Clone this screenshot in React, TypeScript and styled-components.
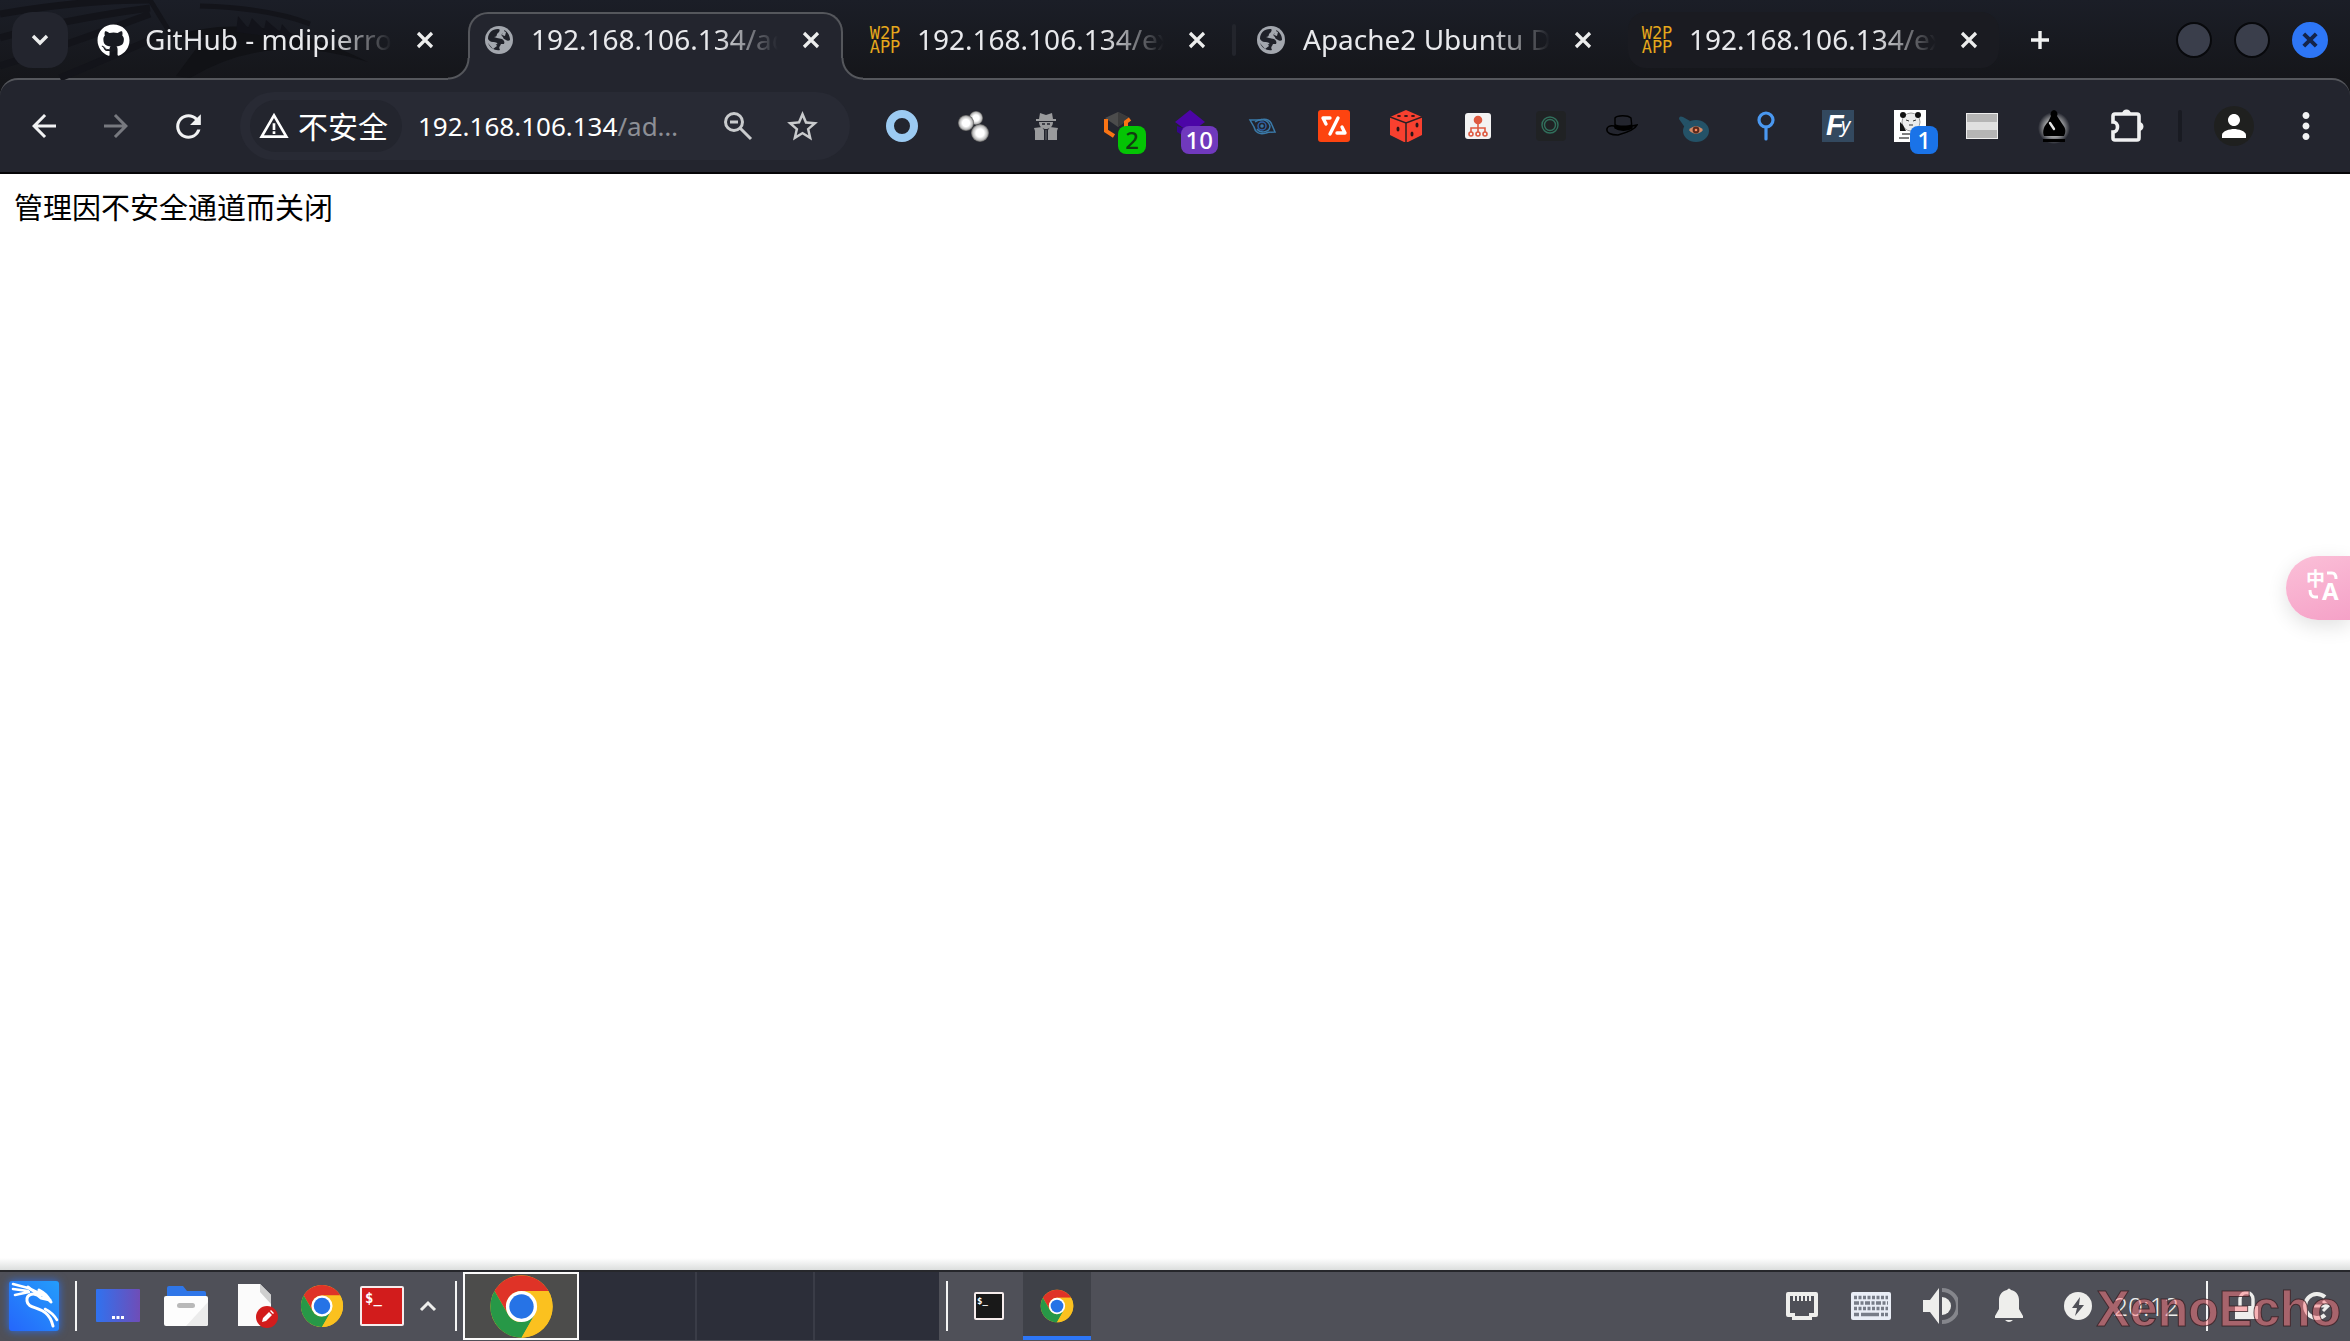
import React from "react";
import styled, { createGlobalStyle, css } from "styled-components";
import { FaGithub } from "react-icons/fa";
import {
  MdArrowBack,
  MdArrowForward,
  MdRefresh,
  MdStarBorder,
  MdMoreVert,
  MdWarningAmber,
  MdPerson,
} from "react-icons/md";

const color = {
  frame: "#1b1e27",
  frameLow: "#15161a",
  toolbar: "#23252e",
  field: "#282a34",
  line: "#55575c",
  text: "#e8e9ec",
  panel: "#4f5058",
  pager: "#2c2e39",
  blue: "#2d76f6",
};

const ui = `"Noto Sans", "Noto Sans CJK SC", sans-serif`;

const GlobalStyle = createGlobalStyle`
  * { box-sizing: border-box; }
  body { margin: 0; background: #fff; font-family: ${ui}; }
  button { border: 0; padding: 0; background: none; color: inherit; font: inherit; cursor: pointer; }
`;

const Screen = styled.div`
  display: flex;
  flex-direction: column;
  min-height: 100vh;
  position: relative;
  overflow: hidden;
`;

const Header = styled.header`
  position: relative;
  background: linear-gradient(${color.frame}, ${color.frameLow} 80px);
  border-bottom: 2px solid #050506;
  color: ${color.text};
`;

const Wallpaper = styled.svg`
  position: absolute;
  top: 0;
  left: 0;
  width: 480px;
  height: 80px;
`;

const TabStrip = styled.div`
  position: relative;
  z-index: 1;
  display: flex;
  height: 78px;
  padding: 12px 22px 0 12px;
`;

const TabSearch = styled.button`
  display: grid;
  place-items: center;
  width: 56px;
  height: 56px;
  margin-right: 16px;
  border-radius: 20px;
  background: ${color.toolbar};
`;

const TabList = styled.div`
  display: flex;
  align-items: flex-start;
  gap: 15px;
`;

const activeTab = css`
  width: 375px;
  height: 68px;
  margin: 0 -2px;
  padding-bottom: 14px;
  border: 2px solid ${color.line};
  border-bottom: 0;
  border-radius: 20px 20px 0 0;
  background: ${color.toolbar};

  &::before,
  &::after {
    content: "";
    position: absolute;
    bottom: 0;
    width: 22px;
    height: 22px;
  }
  &::before {
    left: -22px;
    background: radial-gradient(circle at 0 0, transparent 19px, ${color.line} 20px, ${color.line} 21px, ${color.toolbar} 22px);
  }
  &::after {
    right: -22px;
    background: radial-gradient(circle at 100% 0, transparent 19px, ${color.line} 20px, ${color.line} 21px, ${color.toolbar} 22px);
  }
`;

const Tab = styled.div<{ $active?: boolean; $divided?: boolean; $tinted?: boolean }>`
  position: relative;
  display: flex;
  align-items: center;
  width: 371px;
  height: 56px;
  padding: 0 14px 0 13px;
  border-radius: 18px;
  background: ${(p) => (p.$tinted ? "#1a1b21" : "transparent")};
  ${(p) => p.$active && activeTab}
  ${(p) =>
    p.$divided &&
    css`
      &::after {
        content: "";
        position: absolute;
        right: -9px;
        top: 12px;
        width: 4px;
        height: 32px;
        border-radius: 2px;
        background: #23252c;
      }
    `}
`;

const Favicon = styled.span`
  display: grid;
  place-items: center;
  flex: none;
  width: 32px;
  height: 32px;
  margin-right: 16px;
`;

const PixelMark = styled.span`
  color: #e6a81c;
  font: 17px/14px "DejaVu Sans Mono", monospace;
  text-align: center;
`;

const TabTitle = styled.span`
  flex: 1;
  padding-bottom: 2px;
  overflow: hidden;
  white-space: nowrap;
  font-size: 28px;
  line-height: 40px;
  mask-image: linear-gradient(to right, #000 calc(100% - 60px), transparent);
`;

const IconButton = styled.button`
  display: grid;
  place-items: center;
  flex: none;
  width: 32px;
  height: 32px;
  margin-left: 17px;
`;

const NewTab = styled(IconButton)`
  width: 56px;
  height: 56px;
  margin-left: 13px;
`;

const WindowControls = styled.div`
  display: flex;
  align-items: center;
  gap: 22px;
  height: 56px;
  margin-left: auto;
`;

const WindowButton = styled.button<{ $close?: boolean }>`
  display: grid;
  place-items: center;
  width: 36px;
  height: 36px;
  border: 2px solid ${(p) => (p.$close ? color.blue : "#08090c")};
  border-radius: 50%;
  background: ${(p) => (p.$close ? color.blue : "#3a3e4b")};
`;

const Toolbar = styled.div`
  display: flex;
  align-items: center;
  height: 94px;
  padding: 0 8px;
  border-top: 2px solid ${color.line};
  border-radius: 18px 18px 0 0;
  background: ${color.toolbar};
`;

const ToolButton = styled.button<{ $dim?: boolean }>`
  position: relative;
  display: grid;
  place-items: center;
  flex: none;
  width: 72px;
  height: 72px;
  color: ${(p) => (p.$dim ? "#77797f" : "#f1f2f3")};
`;

const Omnibox = styled.div`
  display: flex;
  flex: 1;
  align-items: center;
  min-width: 0;
  height: 68px;
  margin: 0 16px;
  padding: 0 16px 0 10px;
  border-radius: 34px;
  background: ${color.field};
`;

const SecurityChip = styled.button`
  display: flex;
  align-items: center;
  gap: 8px;
  flex: none;
  height: 52px;
  padding: 0 14px 0 8px;
  border-radius: 26px;
  background: ${color.toolbar};
  color: #fff;
`;

const ChipLabel = styled.span`
  padding-bottom: 2px;
  font-family: "Noto Sans CJK SC", sans-serif;
  font-size: 30px;
  line-height: 40px;
`;

const Address = styled.a`
  flex: 1;
  min-width: 0;
  margin-left: 16px;
  overflow: hidden;
  color: #fff;
  font-size: 26px;
  line-height: 40px;
  text-decoration: none;
  white-space: nowrap;
`;

const AddressPath = styled.span`
  color: #8d8f96;
`;

const FieldButton = styled.button`
  display: grid;
  place-items: center;
  flex: none;
  width: 64px;
  height: 56px;
  color: #c9cbcd;
`;

const Badge = styled.span<{ $bg: string; $ink: string }>`
  position: absolute;
  top: 36px;
  right: 8px;
  min-width: 28px;
  padding: 0 5px;
  border-radius: 8px;
  background: ${(p) => p.$bg};
  color: ${(p) => p.$ink};
  font-size: 24px;
  font-weight: 500;
  line-height: 28px;
  text-align: center;
`;

const ToolDivider = styled.span`
  flex: none;
  width: 4px;
  height: 32px;
  margin: 0 16px;
  border-radius: 2px;
  background: #191b22;
`;

const Profile = styled.span`
  display: grid;
  place-items: center;
  width: 40px;
  height: 40px;
  border-radius: 50%;
  background: #1f201f;
  color: #fff;
`;

const Page = styled.main`
  flex: 1;
  padding: 12px 14px;
  background: linear-gradient(to top, #dcdedd, #fff 12px);
  color: #000;
  font-family: "Noto Sans CJK SC", sans-serif;
  font-size: 29px;
  line-height: 40px;
`;

const TranslateButton = styled.button`
  position: absolute;
  top: 556px;
  right: 0;
  width: 64px;
  height: 64px;
  padding-left: 20px;
  border-radius: 32px 0 0 32px;
  background: linear-gradient(160deg, #fbc0d8, #f5a1c7);
  box-shadow: 0 6px 20px rgba(0, 0, 0, 0.12);
  text-align: left;
`;

const Taskbar = styled.footer`
  position: relative;
  display: flex;
  align-items: center;
  height: 71px;
  padding-bottom: 1px;
  border-top: 2px solid #26272b;
  background: ${color.panel};
  color: #eeeeec;
`;

const Rule = styled.span<{ $before?: number; $after?: number }>`
  flex: none;
  width: 2px;
  height: 50px;
  margin-left: ${(p) => p.$before ?? 0}px;
  margin-right: ${(p) => p.$after ?? 0}px;
  background: #f4f4f4;
`;

const Launcher = styled.button<{ $w: number }>`
  display: grid;
  place-items: center;
  width: ${(p) => p.$w}px;
  height: 60px;
`;

const KaliButton = styled(Launcher)`
  margin: 0 8px 0 9px;
  filter: drop-shadow(0 0 4px #2d6fe8);
`;

const Pager = styled.div`
  display: flex;
  align-self: stretch;
  margin: 0 7px 0 6px;
`;

const Workspace = styled.button<{ $current?: boolean }>`
  display: grid;
  place-items: center;
  width: ${(p) => (p.$current ? 116 : 118)}px;
  border-right: 2px solid #3a3c47;
  background: ${color.pager};
  &:last-child {
    width: 124px;
    border-right: 0;
  }
  ${(p) =>
    p.$current &&
    css`
      border: 2px solid #fafafa;
      background: #4c4c4b;
    `}
`;

const Tasks = styled.div`
  display: flex;
  align-self: stretch;
  margin-left: 7px;
`;

const TaskButton = styled.button<{ $active?: boolean }>`
  display: grid;
  place-items: center;
  width: 68px;
  border-top: 4px solid transparent;
  border-bottom: 4px solid ${(p) => (p.$active ? color.blue : "transparent")};
  background: ${(p) => (p.$active ? "#3f4148" : "transparent")};
`;

const Tray = styled.div`
  display: flex;
  align-items: center;
  margin-left: auto;
`;

const TrayButton = styled.button`
  display: grid;
  place-items: center;
  width: 69px;
  height: 60px;
`;

const Clock = styled.time`
  margin: 0 27px 0 1px;
  font-size: 26px;
  font-weight: 300;
  line-height: 40px;
`;

const Watermark = styled.span`
  position: absolute;
  right: 9px;
  bottom: 4px;
  color: rgba(255, 120, 128, 0.5);
  font: bold 50px/56px "Liberation Sans", sans-serif;
  -webkit-text-stroke: 1px rgba(48, 26, 30, 0.75);
  pointer-events: none;
`;

/* ---------- drawings ---------- */

const Cross = ({ size = 18, ink = "#eceded", w = 3.2 }) => (
  <svg width={size} height={size} viewBox="0 0 18 18" stroke={ink} strokeWidth={w} fill="none">
    <path d="M2 2l14 14M16 2L2 16" />
  </svg>
);

const Globe = () => (
  <svg width="30" height="30" viewBox="0 0 30 30">
    <circle cx="15" cy="15" r="14" fill="#a3a7ae" />
    <path
      fill="#1f2129"
      d="M4 14C4 8 8 4 14 4c2 0 2 1 1 3l-2 2c0 2-1 3-3 3l3 1 5 1c2 1 3 3 2 5h-3l-1 2c-1 1-1 2 0 4-5 1-10-2-12-7l6 1c3 0 4 1 3-1-1-1-3-1-4-1-3 0-4-2-5-3zM20 5c4 2 6 6 6 10-1 1-3 1-4 0s-3-1-3-3c-2-1-2-3 0-4 1 0 2-1 1-3z"
    />
    <path fill="#a3a7ae" d="M3 17l8 1 2 3-4 3zM19 6l3 1-1 4-3-1z" />
  </svg>
);

const Chrome = ({ size }: { size: number }) => (
  <svg width={size} height={size} viewBox="0 0 48 48">
    <circle cx="24" cy="24" r="23" fill="#fbc11f" />
    <path d="M4.1 12.5A23 23 0 0 1 43.9 12.5H24A11.5 11.5 0 0 0 14 29.7z" fill="#df3327" />
    <path d="M4.1 12.5L14 29.8A11.5 11.5 0 0 0 24 35.5L33.9 29.8 24 47A23 23 0 0 1 4.1 12.5z" fill="#279847" />
    <path d="M43.9 12.5A23 23 0 0 1 24 47L33.9 29.8A11.5 11.5 0 0 0 34 18L24 12.5z" fill="#fbc11f" />
    <circle cx="24" cy="24" r="11.5" fill="#fff" />
    <circle cx="24" cy="24" r="9" fill="#2673e6" />
  </svg>
);

const ext = (body: React.ReactNode) => (
  <svg width="32" height="32" viewBox="0 0 32 32" fill="none">
    {body}
  </svg>
);

const extensions: { name: string; icon: React.ReactNode; badge?: [string, string, string] }[] = [
  { name: "Ring", icon: ext(<circle cx="16" cy="16" r="12" stroke="#9ccbf2" strokeWidth="8" />) },
  {
    name: "Dots",
    icon: ext(
      <>
        <defs>
          <radialGradient id="dot">
            <stop offset="0.45" stopColor="#fff" />
            <stop offset="0.8" stopColor="#bcbcbc" />
            <stop offset="1" stopColor="#555" />
          </radialGradient>
        </defs>
        <circle cx="18" cy="8" r="7" fill="url(#dot)" />
        <circle cx="8" cy="13" r="8" fill="url(#dot)" />
        <circle cx="22" cy="23" r="9" fill="url(#dot)" />
      </>
    ),
  },
  {
    name: "Agent",
    icon: ext(
      <g fill="#9a9b9d">
        <path d="M10 3l6 2 6-2 1 6H9zM6 9h20v2H6zM9 12h14c0 5-4 7-7 7s-7-2-7-7z" />
        <path d="M4 18l8-1 2 3v10H5V21zM28 18l-8-1-2 3v10h9V21z" />
        <path d="M15 20h2v10h-2z" fill="#44464c" />
        <path d="M12 14h3M17 14h3" stroke="#23252e" strokeWidth="1.5" />
      </g>
    ),
  },
  {
    name: "Cube",
    badge: ["2", "#04c404", "#123c12"],
    icon: ext(
      <>
        <path d="M3 8l13-6 12 6-12 9z" fill="#4c4c4c" />
        <path d="M16 2l12 6-12 9z" fill="#3b3b3b" />
        <path d="M4 9v12l8 5M28 9l-4 3v5" stroke="#f97414" strokeWidth="4" />
      </>
    ),
  },
  {
    name: "Layers",
    badge: ["10", "#7039bd", "#fff"],
    icon: ext(
      <>
        <path d="M16 0l15 12-15 11L1 12z" fill="#4c05a7" />
        <path d="M3 16l12 4v9L3 22z" fill="#35058a" />
      </>
    ),
  },
  {
    name: "Eye",
    icon: ext(
      <g stroke="#3a7aa9" strokeWidth="1.5">
        <path d="M4 10h10c7-2 11 1 12 5l3 7c-4 0-6 0-9 1-7 2-11-1-12-6z" />
        <path d="M9 12c5-4 13-3 15 4 0 6-9 8-13 3" />
        <circle cx="16" cy="16" r="4" stroke="#2d5ea6" />
        <circle cx="16" cy="16" r="1" />
      </g>
    ),
  },
  {
    name: "Code",
    icon: ext(
      <>
        <rect width="32" height="32" rx="3" fill="#fd4410" />
        <path d="M12 8H5l3 6M20 8l-8 16M19 23h8l-3-6" stroke="#fff" strokeWidth="3.4" strokeLinejoin="round" strokeLinecap="round" />
      </>
    ),
  },
  {
    name: "Dice",
    icon: ext(
      <>
        <path d="M16 0l16 7v18l-16 8L0 25V7z" fill="#f8402f" />
        <path d="M0 7l16 6 16-6M16 13v19" stroke="#2a2025" strokeWidth="1.5" />
        <g fill="#2a1518">
          <ellipse cx="9" cy="6" rx="2" ry="1" />
          <ellipse cx="16" cy="6" rx="2" ry="1" />
          <ellipse cx="23" cy="6" rx="2" ry="1" />
          <ellipse cx="8" cy="19" rx="1.5" ry="2.5" />
          <ellipse cx="27" cy="15" rx="1.5" ry="2.5" />
          <ellipse cx="22" cy="24" rx="1.5" ry="2.5" />
        </g>
      </>
    ),
  },
  {
    name: "Tree",
    icon: ext(
      <>
        <rect x="3" y="3" width="26" height="26" rx="3" fill="#f3f3f3" />
        <g stroke="#df5a41" strokeWidth="1.6">
          <circle cx="16" cy="10" r="3.5" fill="#df5a41" />
          <path d="M16 13v9M9 22v-4h14v4" />
          <circle cx="9" cy="24" r="2" />
          <circle cx="16" cy="24" r="2" />
          <circle cx="23" cy="24" r="2" />
        </g>
      </>
    ),
  },
  {
    name: "Target",
    icon: ext(
      <>
        <rect x="2" y="1" width="30" height="30" rx="4" fill="#202224" />
        <circle cx="16" cy="15" r="8" stroke="#31705c" strokeWidth="1.4" />
        <circle cx="16" cy="15" r="5.5" stroke="#31705c" strokeWidth="1.4" />
      </>
    ),
  },
  {
    name: "Hat",
    icon: ext(
      <>
        <path d="M8 16c4 4 14 4 18 0l5-1c-2 5-12 8-19 10-7 0-12-2-11-6 0-2 3-4 7-3z" fill="#23252e" stroke="#000" strokeWidth="1.6" />
        <path d="M9 8c2-3 13-3 16 0l1 10c-4 3-13 3-17 0z" fill="#23252e" stroke="#000" strokeWidth="1.4" />
        <path d="M9 14c4 2 13 2 17 0v4c-4 3-13 3-17 0z" fill="#000" />
      </>
    ),
  },
  {
    name: "Watch",
    icon: ext(
      <>
        <path d="M1 9c0-3 2-3 4-2l7 4-4 8z" fill="#245267" />
        <ellipse cx="18" cy="21" rx="13" ry="11" fill="#245267" />
        <path d="M11 20c4-5 10-5 14 0-4 5-10 5-14 0z" fill="#d48a66" />
        <circle cx="18" cy="20" r="3.4" fill="#5b2a1d" />
        <circle cx="18" cy="20" r="1.3" fill="#ff8b5d" />
      </>
    ),
  },
  {
    name: "Pin",
    icon: ext(
      <g stroke="#4a98f0" strokeWidth="3.2" strokeLinecap="round">
        <circle cx="16" cy="10" r="7" />
        <path d="M16 17v12" />
      </g>
    ),
  },
  {
    name: "Fy",
    icon: ext(
      <>
        <rect width="32" height="32" fill="#33495f" />
        <text x="4" y="25" fill="#fff" fontFamily="Liberation Sans, sans-serif" fontStyle="italic" fontWeight="bold" fontSize="29">F</text>
        <text x="19" y="22" fill="#fff" fontFamily="Noto Sans, sans-serif" fontStyle="italic" fontSize="20">y</text>
      </>
    ),
  },
  {
    name: "Panda",
    badge: ["1", "#1a73e8", "#fff"],
    icon: ext(
      <>
        <rect width="32" height="32" fill="#fff" />
        <ellipse cx="17" cy="12" rx="9" ry="9" fill="#ececec" stroke="#9a9a9a" />
        <circle cx="9" cy="5" r="3" fill="#111" />
        <circle cx="24" cy="5" r="3" fill="#111" />
        <path d="M6 12l3 3 3 6H6z" fill="#111" />
        <path d="M12 10l3 1M19 11l3-1M15 15h4" stroke="#333" />
        <path d="M8 24h8M5 28h10" stroke="#555" strokeWidth="1.4" />
      </>
    ),
  },
  {
    name: "Bars",
    icon: ext(
      <>
        <rect x="0.5" y="3.5" width="31" height="25" fill="#b5b5b5" stroke="#ededed" />
        <rect x="1" y="12" width="30" height="8" fill="#e0e0e0" />
      </>
    ),
  },
  {
    name: "Bishop",
    icon: (
      <svg width="36" height="36" viewBox="-2 -2 36 36">
        <defs>
          <radialGradient id="glow">
            <stop offset="0.55" stopColor="#a0a1a3" />
            <stop offset="1" stopColor="#23252e" />
          </radialGradient>
        </defs>
        <circle cx="16" cy="18" r="16" fill="url(#glow)" />
        <path d="M16 0a4 4 0 0 1 3 6l6 9c3 4 3 7 1 11H6c-2-5 0-10 4-14l3-6a4 4 0 0 1 3-6zM5 29h22v3H5z" fill="#000" />
        <path d="M12 13l4 6" stroke="#e5e5e5" strokeWidth="2.4" strokeLinecap="round" />
      </svg>
    ),
  },
  {
    name: "扩展程序",
    icon: (
      <svg width="36" height="36" viewBox="-3 -2 36 36" fill="none">
        <path
          d="M4 4h22q2 0 2 2v22q0 2-2 2H4q-2 0-2-2v-6c6 0 6-10 0-10V6q0-2 2-2z"
          stroke="#eff0f1"
          strokeWidth="3.6"
        />
        <path d="M11 4a4.500 4.500 0 0 1 9 0zM28 12a4.500 4.500 0 0 1 0 9z" fill="#eff0f1" />
      </svg>
    ),
  },
];

const W2p = () => (
  <PixelMark>
    W2P
    <br />
    APP
  </PixelMark>
);

const tabs = [
  { title: "GitHub - mdipierro/evote", icon: <FaGithub size={33} color="#fff" /> },
  { title: "192.168.106.134/admin", icon: <Globe />, active: true },
  { title: "192.168.106.134/examples", icon: <W2p />, divided: true },
  { title: "Apache2 Ubuntu Default", icon: <Globe /> },
  { title: "192.168.106.134/examples", icon: <W2p />, tinted: true },
];

const Kali = () => (
  <svg width="50" height="50" viewBox="0 0 50 50" fill="none">
    <defs>
      <linearGradient id="kali" x1="0" y1="1" x2="1" y2="0">
        <stop offset="0" stopColor="#2566fb" />
        <stop offset="1" stopColor="#249dfb" />
      </linearGradient>
    </defs>
    <rect width="50" height="50" rx="3" fill="url(#kali)" />
    <g stroke="#fff" strokeWidth="2.6" strokeLinecap="round" strokeLinejoin="round">
      <path d="M4 3l15 4M4 8l15 2M6 14l14-3" />
      <path d="M19 6c5 6 12 3 22 14M30 9c6 3 8 6 12 12M41 19l-9-2c-6-7-15-4-14 3 1 10 21 3 26 25" strokeWidth="3" />
      <path d="M36 28c6 3 9 6 12 11" />
    </g>
  </svg>
);

const DesktopIcon = () => (
  <svg width="44" height="34" viewBox="0 0 44 34">
    <defs>
      <linearGradient id="desk">
        <stop offset="0" stopColor="#3072ef" />
        <stop offset="1" stopColor="#6f4db7" />
      </linearGradient>
    </defs>
    <rect width="44" height="33" rx="1" fill="url(#desk)" />
    <path d="M16 27h3v3h-3zM20.500 27h3v3h-3zM25 27h3v3h-3z" fill="#fff" />
  </svg>
);

const FolderIcon = () => (
  <svg width="44" height="40" viewBox="0 0 44 40">
    <path d="M3 2q0-2 2-2h14l4 5h17q2 0 2 2v8H3z" fill="#2f76e8" />
    <rect y="10" width="44" height="30" rx="2" fill="#fdfdfd" />
    <path d="M44 16v22q0 2-2 2H22z" fill="#ececec" />
    <rect x="13" y="17" width="18" height="5" rx="2.500" fill="#b9b9b9" />
  </svg>
);

const EditorIcon = () => (
  <svg width="42" height="46" viewBox="0 0 42 46">
    <path d="M1 1h22l11 11v31H1z" fill="#fbfbfb" />
    <path d="M23 1l11 11v9L23 9z" fill="#cfcfcf" />
    <circle cx="30" cy="34" r="11" fill="#d21c1c" />
    <path d="M25 39l1-4 6-6 3 3-6 6zM33 28l1-1 3 3-1 1z" fill="#fff" />
  </svg>
);

const Terminal = ({ w, h, bg }: { w: number; h: number; bg: string }) => (
  <svg width={w} height={h} viewBox={`0 0 ${w} ${h}`}>
    <rect x="1" y="1" width={w - 2} height={h - 2} rx="1" fill={bg} stroke="#f6ecec" strokeWidth="2" />
    <text
      x={w > 40 ? 5 : 3}
      y={w > 40 ? 17 : 12}
      fill="#fff"
      fontFamily="DejaVu Sans Mono, monospace"
      fontWeight="bold"
      fontSize={w > 40 ? 14 : 9}
    >
      $_
    </text>
  </svg>
);

const Ethernet = () => (
  <svg width="32" height="28" viewBox="0 0 32 28">
    <path d="M2 0h28q2 0 2 2v21q0 2-2 2h-4v3H6v-3H2q-2 0-2-2V2q0-2 2-2z" fill="#eeeeec" />
    <path d="M4 4h24v17h-5v3H9v-3H4z" fill={color.panel} />
    <path d="M8 4v5M12 4v5M16 4v5M20 4v5M24 4v5" stroke="#eeeeec" strokeWidth="2" />
  </svg>
);

const Keyboard = () => (
  <svg width="42" height="29" viewBox="0 0 42 29">
    <rect x="1" y="0" width="40" height="28" rx="2" fill="#e9edf6" />
    <g stroke="#777c88" strokeWidth="3.4">
      <path d="M4 5.500h34" strokeDasharray="3 1.500" />
      <path d="M4 11h34" strokeDasharray="5 1.500 3 1.500" />
      <path d="M4 16.500h34" strokeDasharray="3 1.500" />
      <path d="M4 22.500h5M11 22.500h18M31 22.500h3M35 22.500h3" />
    </g>
  </svg>
);

const Volume = () => (
  <svg width="36" height="38" viewBox="0 0 36 38" fill="none">
    <path d="M1 13h7L17 1v36L8 25H1z" fill="#eeeeec" />
    <path d="M20 10a9 9 0 0 1 0 18z" fill="#eeeeec" />
    <path d="M20 3a16 16 0 0 1 0 32" stroke="#85868c" strokeWidth="4" />
  </svg>
);

const Bell = () => (
  <svg width="30" height="36" viewBox="0 0 30 36" fill="#eeeeec">
    <path d="M13 2q2-3 4 0c5 1 8 5 8 10v9l4 7v2H1v-2l4-7v-9C5 7 8 3 13 2zM11 32h8q-4 4-8 0z" />
  </svg>
);

const Power = () => (
  <svg width="28" height="28" viewBox="0 0 28 28">
    <circle cx="14" cy="14" r="14" fill="#eeeeec" />
    <path d="M16 5l-8 11h5l-2 8 9-11h-5z" fill={color.panel} />
  </svg>
);

const Lock = () => (
  <svg width="26" height="30" viewBox="0 0 26 30" fill="none">
    <path d="M6 16V8a6.500 6.500 0 0 1 13 0v8" stroke="#eeeeec" strokeWidth="3.400" />
    <path d="M1 15h23v13H1z" fill="#eeeeec" />
  </svg>
);

const Logout = () => (
  <svg width="30" height="30" viewBox="0 0 30 30" fill="none" stroke="#eeeeec" strokeWidth="4">
    <path d="M24 6A12 12 0 1 0 24 24" />
    <path d="M13 15h14M22 10l5 5-5 5" strokeWidth="3" />
  </svg>
);

export default function App() {
  return (
    <Screen>
      <GlobalStyle />
      <Header>
        <Wallpaper viewBox="0 0 480 80" aria-hidden="true">
          <g fill="none" stroke="#13141a" strokeWidth="7">
            <path d="M0 14Q80 0 150 0M0 38Q60 20 150 8M60 78L160 36M0 66Q70 44 150 14" />
            <path d="M150 0L172 36M200 6Q270 8 310 24" strokeWidth="5" />
          </g>
          <path d="M172 36Q260 8 368 62Q270 30 190 78L176 76 204 38z" fill="#111216" />
          <path d="M238 16l10 12 4-10 12 12 2-10 14 12 2-8 14 16-60-8z" fill="#12131a" />
        </Wallpaper>
        <TabStrip>
          <TabSearch aria-label="搜索标签页">
            <svg width="20" height="20" viewBox="0 0 20 20" fill="none" stroke="#eceded" strokeWidth="3.4">
              <path d="M3 6l7 7 7-7" />
            </svg>
          </TabSearch>
          <TabList role="tablist">
            {tabs.map((t, i) => (
              <Tab key={i} role="tab" aria-selected={!!t.active} $active={t.active} $divided={t.divided} $tinted={t.tinted}>
                <Favicon>{t.icon}</Favicon>
                <TabTitle>{t.title}</TabTitle>
                <IconButton aria-label="关闭">
                  <Cross />
                </IconButton>
              </Tab>
            ))}
          </TabList>
          <NewTab aria-label="新标签页">
            <svg width="22" height="22" viewBox="0 0 22 22" stroke="#f0f1f1" strokeWidth="3.4">
              <path d="M11 2v18M2 11h18" />
            </svg>
          </NewTab>
          <WindowControls>
            <WindowButton aria-label="最小化" />
            <WindowButton aria-label="最大化" />
            <WindowButton aria-label="关闭窗口" $close>
              <Cross size={16} ink="#14244a" w={4.4} />
            </WindowButton>
          </WindowControls>
        </TabStrip>
        <Toolbar>
          <ToolButton aria-label="后退">
            <MdArrowBack size={36} />
          </ToolButton>
          <ToolButton aria-label="前进" $dim>
            <MdArrowForward size={36} />
          </ToolButton>
          <ToolButton aria-label="重新加载">
            <MdRefresh size={37} />
          </ToolButton>
          <Omnibox>
            <SecurityChip>
              <MdWarningAmber size={32} />
              <ChipLabel>不安全</ChipLabel>
            </SecurityChip>
            <Address href="#">
              192.168.106.134<AddressPath>/ad…</AddressPath>
            </Address>
            <FieldButton aria-label="缩放">
              <svg width="30" height="30" viewBox="0 0 30 30" fill="none" stroke="currentColor" strokeWidth="3">
                <circle cx="11" cy="11" r="8.500" />
                <path d="M17 17l11 11M7 11h8" />
              </svg>
            </FieldButton>
            <FieldButton aria-label="收藏">
              <MdStarBorder size={37} />
            </FieldButton>
          </Omnibox>
          {extensions.map((e) => (
            <ToolButton key={e.name} aria-label={e.name}>
              {e.icon}
              {e.badge && (
                <Badge $bg={e.badge[1]} $ink={e.badge[2]}>
                  {e.badge[0]}
                </Badge>
              )}
            </ToolButton>
          ))}
          <ToolDivider />
          <ToolButton aria-label="个人资料">
            <Profile>
              <MdPerson size={36} />
            </Profile>
          </ToolButton>
          <ToolButton aria-label="菜单">
            <MdMoreVert size={42} />
          </ToolButton>
        </Toolbar>
      </Header>

      <Page>管理因不安全通道而关闭</Page>

      <TranslateButton aria-label="翻译">
        <svg width="34" height="34" viewBox="0 0 34 34" fill="none">
          <text x="0" y="17" fill="#fff" fontFamily="Noto Sans CJK SC, sans-serif" fontWeight="bold" fontSize="19">中</text>
          <text x="16" y="31" fill="#fff" fontFamily="Noto Sans, sans-serif" fontWeight="bold" fontSize="24">A</text>
          <path d="M21 4h5q4 0 4 6M4 21q0 7 5 7h3" stroke="#fff" strokeWidth="3" />
        </svg>
      </TranslateButton>

      <Taskbar>
        <KaliButton $w={50} aria-label="应用程序">
          <Kali />
        </KaliButton>
        <Rule $before={8} $after={11} />
        <Launcher $w={60} aria-label="桌面">
          <DesktopIcon />
        </Launcher>
        <Launcher $w={76} aria-label="文件">
          <FolderIcon />
        </Launcher>
        <Launcher $w={68} aria-label="编辑器">
          <EditorIcon />
        </Launcher>
        <Launcher $w={60} aria-label="Chrome">
          <Chrome size={44} />
        </Launcher>
        <Launcher $w={60} aria-label="终端">
          <Terminal w={44} h={40} bg="#d21c1c" />
        </Launcher>
        <Launcher $w={32} aria-label="更多">
          <svg width="18" height="12" viewBox="0 0 18 12" fill="none" stroke="#eeeeec" strokeWidth="3">
            <path d="M2 10l7-7 7 7" />
          </svg>
        </Launcher>
        <Rule $before={11} />
        <Pager>
          <Workspace $current aria-label="工作区 1">
            <Chrome size={65} />
          </Workspace>
          <Workspace aria-label="工作区 2" />
          <Workspace aria-label="工作区 3" />
          <Workspace aria-label="工作区 4" />
        </Pager>
        <Rule />
        <Tasks>
          <TaskButton aria-label="终端窗口">
            <Terminal w={30} h={28} bg="#191919" />
          </TaskButton>
          <TaskButton aria-label="浏览器窗口" $active>
            <Chrome size={34} />
          </TaskButton>
        </Tasks>
        <Tray>
          <TrayButton aria-label="网络">
            <Ethernet />
          </TrayButton>
          <TrayButton aria-label="键盘">
            <Keyboard />
          </TrayButton>
          <TrayButton aria-label="音量">
            <Volume />
          </TrayButton>
          <TrayButton aria-label="通知">
            <Bell />
          </TrayButton>
          <TrayButton aria-label="电源">
            <Power />
          </TrayButton>
          <Clock>20:12</Clock>
          <Rule $after={4} />
          <TrayButton aria-label="锁定">
            <Lock />
          </TrayButton>
          <TrayButton aria-label="注销">
            <Logout />
          </TrayButton>
        </Tray>
        <Watermark>XenoEcho</Watermark>
      </Taskbar>
    </Screen>
  );
}
